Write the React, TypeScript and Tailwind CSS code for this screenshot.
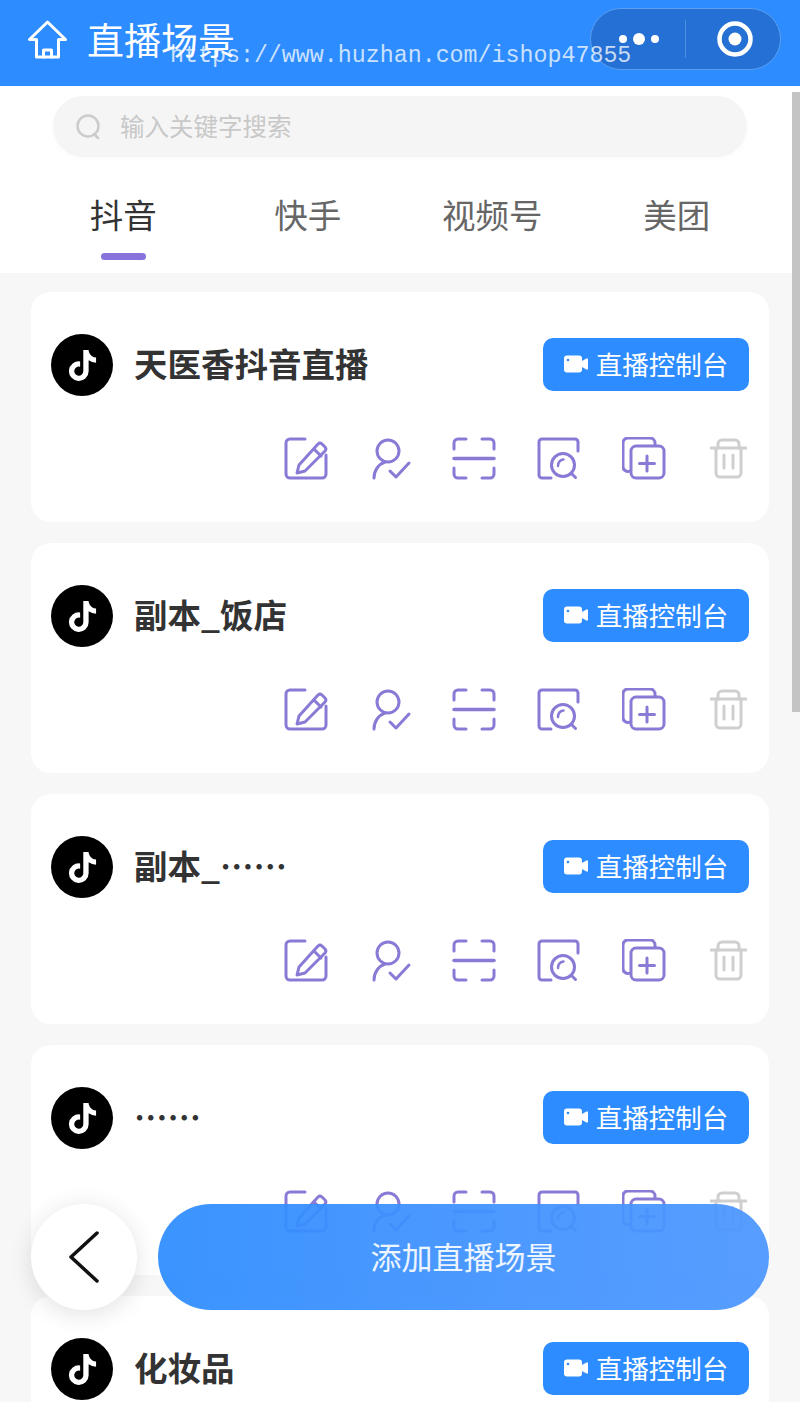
import { FaTiktok } from 'react-icons/fa6';

const scenes = ['天医香抖音直播', '副本_饭店', '副本_……', '……', '化妆品'];
const tabs = ['抖音', '快手', '视频号', '美团'];

const cjk = "font-['Noto_Sans_CJK_SC','Noto_Sans',sans-serif]";

const EditIcon = () => (
  <svg width="44" height="44" viewBox="0 0 44 44" fill="none" stroke="#8a7ad6" strokeWidth="3" strokeLinecap="round" strokeLinejoin="round">
    <path d="M21 2H6a4 4 0 0 0-4 4v31a4 4 0 0 0 4 4h32a4 4 0 0 0 4-4V18" />
    <path d="M13 36l2-8L34 7a3 3 0 0 1 4 0l3 3a3 3 0 0 1 0 4L21 34z" />
    <path d="M30 12l7 7" />
  </svg>
);

const UserIcon = () => (
  <svg width="40" height="44" viewBox="0 0 40 44" fill="none" stroke="#8a7ad6" strokeWidth="3" strokeLinecap="round" strokeLinejoin="round">
    <circle cx="16" cy="14" r="11" />
    <path d="M2 41c0-8 5-14 11-16" />
    <path d="M18 34l6 6 13-14" />
  </svg>
);

const ScanIcon = () => (
  <svg width="44" height="44" viewBox="0 0 44 44" fill="none" stroke="#8a7ad6" strokeWidth="3" strokeLinecap="round" strokeLinejoin="round">
    <path d="M2 12V6a4 4 0 0 1 4-4h8" />
    <path d="M30 2h8a4 4 0 0 1 4 4v6" />
    <path d="M2 31v6a4 4 0 0 0 4 4h8" />
    <path d="M30 41h8a4 4 0 0 0 4-4v-6" />
    <path d="M2 21.5h40" strokeWidth="3.5" />
  </svg>
);

const ReviewIcon = () => (
  <svg width="44" height="44" viewBox="0 0 44 44" fill="none" stroke="#8a7ad6" strokeWidth="3" strokeLinecap="round" strokeLinejoin="round">
    <path d="M41 14V5a3 3 0 0 0-3-3H5a3 3 0 0 0-3 3v33a3 3 0 0 0 3 3h9" />
    <circle cx="26" cy="28" r="11.5" />
    <path d="M34.5 36.5l4 4" />
    <path d="M21 29c0-4 2-6 5.500-6.500" strokeWidth="2.500" />
  </svg>
);

const CopyIcon = () => (
  <svg width="44" height="44" viewBox="0 0 44 44" fill="none" stroke="#8a7ad6" strokeWidth="3" strokeLinecap="round" strokeLinejoin="round">
    <path d="M33 8V6a5 5 0 0 0-5-5H7a5 5 0 0 0-6 5v23a5 5 0 0 0 7 5" />
    <rect x="9" y="9" width="33" height="32" rx="5" />
    <path d="M25 19v15M17.500 26.500h15" />
  </svg>
);

const TrashIcon = () => (
  <svg width="37" height="44" viewBox="0 0 37 44" fill="none" stroke="#cfcfcf" strokeWidth="3" strokeLinecap="round" strokeLinejoin="round">
    <path d="M1 11h35" />
    <path d="M8 11V7a4 4 0 0 1 4-4h13a4 4 0 0 1 4 4v4" />
    <path d="M6 11v25a4 4 0 0 0 4 4h17a4 4 0 0 0 4-4V11" />
    <path d="M14 18v13M23 18v13" />
  </svg>
);

const VideoIcon = () => (
  <svg width="24" height="18" viewBox="0 0 24 18">
    <rect x="0" y="0.500" width="18" height="17" rx="3" fill="#fff" />
    <path d="M16 7l6.500-3.500a1 1 0 0 1 1.500 1v9a1 1 0 0 1-1.500 1L16 11z" fill="#fff" />
    <circle cx="4" cy="5" r="1.300" fill="#2d8cff" />
  </svg>
);

const SceneCard = ({ name }: { name: string }) => (
  <div className="h-[230px] shrink-0 rounded-[20px] bg-white px-5 pt-[42px]">
    <div className="flex h-[62px] items-center">
      <div className="flex h-[62px] w-[62px] items-center justify-center rounded-full bg-black">
        <FaTiktok className="text-white" size={31} />
      </div>
      <div className="ml-[21px] flex-1 pb-[4px] text-[33.500px] leading-none font-bold text-[#333333]">{name}</div>
      <button className="mb-[1px] flex h-[53px] w-[206px] items-center justify-center gap-[8px] rounded-[10px] bg-[#2d8cff] pb-[2px] text-[26.500px] text-white">
        <VideoIcon />
        直播控制台
      </button>
    </div>
    <div className="mt-[41px] flex pl-[233px]">
      <EditIcon />
      <div className="ml-[44px]"><UserIcon /></div>
      <div className="ml-[40px]"><ScanIcon /></div>
      <div className="ml-[41px]"><ReviewIcon /></div>
      <div className="ml-[41px]"><CopyIcon /></div>
      <div className="ml-[44px]"><TrashIcon /></div>
    </div>
  </div>
);

export default function App() {
  return (
    <div className={`relative h-[1402px] w-[800px] overflow-hidden bg-[#f7f7f7] ${cjk}`}>
      {/* header */}
      <div className="flex h-[86px] items-center justify-between bg-[#2d8cff] pr-[19px] pb-[8px] pl-[28px]">
        <div className="flex items-center gap-[20px]">
          <svg width="39" height="39" viewBox="0 0 39 39" fill="none" stroke="#fff" strokeWidth="3" strokeLinejoin="round" strokeLinecap="round">
            <path d="M19.500 2L1.500 19.500h7V37h22V19.500h7z" />
            <path d="M15.500 37v-7h8v7" />
          </svg>
          <span className="text-[37px] leading-none text-white">直播场景</span>
        </div>
        <div className="flex h-[62px] w-[191px] items-center rounded-full border border-[#5a9ff0] bg-[#2470d4]">
          <div className="flex w-[94px] items-center justify-center gap-[6px] pl-[2px]">
            <span className="h-[8px] w-[8px] rounded-full bg-white" />
            <span className="h-[12px] w-[12px] rounded-full bg-white" />
            <span className="h-[8px] w-[8px] rounded-full bg-white" />
          </div>
          <div className="h-[38px] w-px bg-[#4f8fe0]" />
          <div className="flex flex-1 items-center justify-center pl-[4px]">
            <svg width="36" height="36" viewBox="0 0 36 36">
              <circle cx="18" cy="18" r="15.500" fill="none" stroke="#fff" strokeWidth="4.500" />
              <circle cx="18" cy="18" r="6.500" fill="#fff" />
            </svg>
          </div>
        </div>
      </div>

      {/* search + tabs */}
      <div className="bg-white pt-[10px]">
        <div className="mx-[53px] flex h-[61px] items-center gap-[20px] rounded-full bg-[#f5f5f5] pl-[23px] shadow-[0_2px_6px_rgba(0,0,0,0.02)]">
          <svg width="24" height="26" viewBox="0 0 24 26" fill="none" stroke="#cccccc" strokeWidth="2.500" strokeLinecap="round">
            <circle cx="12" cy="12" r="10.500" />
            <path d="M18 20l4 4" />
          </svg>
          <span className="text-[24.500px] leading-none text-[#c8c8c8]">输入关键字搜索</span>
        </div>
        <div className="grid grid-cols-4 px-[31px] pt-[33px] pb-[13px]">
          {tabs.map((tab, i) => (
            <div key={tab} className="flex flex-col items-center">
              <span className={`text-[33.500px] leading-[48px] ${i === 0 ? 'text-[#333333]' : 'text-[#666666]'}`}>{tab}</span>
              <span className={`mt-[15px] h-[7px] w-[45px] rounded-full ${i === 0 ? 'bg-[#8a72dc]' : 'bg-transparent'}`} />
            </div>
          ))}
        </div>
      </div>

      {/* scene list */}
      <div className="flex flex-col gap-[21px] px-[31px] pt-[19px]">
        {scenes.map((name, i) => (
          <SceneCard key={i} name={name} />
        ))}
      </div>

      {/* scrollbar */}
      <div className="absolute top-[92px] right-0 h-[620px] w-[8px] bg-[#c4c4c4]" />

      {/* bottom actions */}
      <div className="absolute top-[1204px] left-[31px] flex w-[738px] gap-[21px]">
        <button className="flex h-[106px] w-[106px] shrink-0 items-center justify-center rounded-full bg-white shadow-[0_4px_24px_rgba(0,0,0,0.12)]">
          <svg width="30" height="52" viewBox="0 0 30 52" fill="none" stroke="#111" strokeWidth="3.500" strokeLinecap="round" strokeLinejoin="round">
            <path d="M28 2L2 26l26 24" />
          </svg>
        </button>
        <button className="flex h-[106px] flex-1 items-center justify-center rounded-full bg-linear-to-r from-[#2d8cffee] to-[#4d97fff0] pb-[2px] text-[31px] text-white/90">
          添加直播场景
        </button>
      </div>

      {/* watermark */}
      <div className="absolute top-[39px] left-[170px] font-['Liberation_Mono',monospace] text-[23.300px] leading-[34px] whitespace-nowrap text-white/75">
        https://www.huzhan.com/ishop47855
      </div>
    </div>
  );
}
